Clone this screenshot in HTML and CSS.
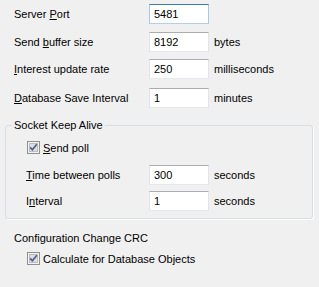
FILE: index.html
```html
<!DOCTYPE html>
<html lang="en">
<head>
    <meta charset="UTF-8">
    <title>Server Settings</title>
    <link rel="stylesheet" href="styles.css">
</head>
<body>
    <div class="fields">
        <div class="row first">
            <label class="label">Server <u>P</u>ort</label>
            <input class="text focus" type="text" value="5481">
        </div>
        <div class="row gap8">
            <label class="label">Send <u>b</u>uffer size</label>
            <input class="text" type="text" value="8192">
            <span class="unit">bytes</span>
        </div>
        <div class="row gap7">
            <label class="label"><u>I</u>nterest update rate</label>
            <input class="text" type="text" value="250">
            <span class="unit">milliseconds</span>
        </div>
        <div class="row gap9">
            <label class="label"><u>D</u>atabase Save Interval</label>
            <input class="text" type="text" value="1">
            <span class="unit">minutes</span>
        </div>
    </div>

    <fieldset class="group">
        <legend>Socket Keep Alive</legend>
        <div class="group-body">
            <label class="check">
                <svg width="13" height="13" viewBox="0 0 13 13">
                    <rect x="0.5" y="0.5" width="12" height="12" fill="#f4f4f4" stroke="#8e8f8f"/>
                    <rect x="2.5" y="2.5" width="8" height="8" fill="#dedede" stroke="#bcbcbc"/>
                    <path d="M3.2 6.4 L5.4 8.8 L9.8 3.2" fill="none" stroke="#4a5f8f" stroke-width="1.7"/>
                </svg>
                <span><u>S</u>end poll</span>
            </label>
            <div class="row inner gap11">
                <label class="label short"><u>T</u>ime between polls</label>
                <input class="text" type="text" value="300">
                <span class="unit">seconds</span>
            </div>
            <div class="row inner gap6">
                <label class="label short">I<u>n</u>terval</label>
                <input class="text" type="text" value="1">
                <span class="unit">seconds</span>
            </div>
        </div>
    </fieldset>

    <div class="crc">
        <div class="crc-title">Configuration Change CRC</div>
        <label class="check">
            <svg width="13" height="13" viewBox="0 0 13 13">
                <rect x="0.5" y="0.5" width="12" height="12" fill="#f4f4f4" stroke="#8e8f8f"/>
                <rect x="2.5" y="2.5" width="8" height="8" fill="#dedede" stroke="#bcbcbc"/>
                <path d="M3.2 6.4 L5.4 8.8 L9.8 3.2" fill="none" stroke="#4a5f8f" stroke-width="1.7"/>
            </svg>
            <span>Calculate for Database Objects</span>
        </label>
    </div>
</body>
</html>
```

FILE: styles.css
```css
body {
    margin: 0;
    background-color: #f0f0f0;
    font-family: "Liberation Sans", Arial, sans-serif;
    font-size: 11px;
    color: #000;
}

u {
    text-decoration: underline;
    text-underline-offset: 1px;
}

/* Top fields */
.fields {
    padding: 4px 0 0 14px;
}

.row {
    display: flex;
    align-items: center;
    height: 20px;
}

.gap6 { margin-top: 6px; }
.gap7 { margin-top: 7px; }
.gap8 { margin-top: 8px; }
.gap9 { margin-top: 9px; }
.gap11 { margin-top: 11px; }

.label {
    width: 135px;
    flex: none;
}

.label.short {
    width: 123px;
}

.text {
    box-sizing: border-box;
    width: 60px;
    height: 20px;
    margin: 0;
    padding: 0 0 0 4px;
    border: 1px solid #e2e3ea;
    border-top-color: #abadb3;
    border-bottom-color: #e3e9ef;
    background-color: #fff;
    font-family: inherit;
    font-size: 11px;
    color: #000;
    outline: none;
}

.text.focus {
    border-color: #b5cfe7;
    border-top-color: #3d7bad;
    border-left-color: #a4c9e3;
    border-right-color: #a4c9e3;
}

.unit {
    margin-left: 5px;
}

/* Group box */
.group {
    box-sizing: border-box;
    width: 308px;
    margin: 11px 0 0 5px;
    padding: 0 0 7px 6px;
    border: 1px solid #d5dfe5;
    border-radius: 3px;
    box-shadow: 1px 1px 0 #fff;
}

.group legend {
    padding: 0 2px;
    line-height: 13px;
}

.group-body {
    padding: 9px 0 0 14px;
}

.check {
    display: flex;
    align-items: center;
    gap: 3px;
    height: 13px;
}

.check svg {
    display: block;
    margin-left: 1px;
}

/* Configuration CRC */
.crc {
    padding: 13px 0 0 14px;
}

.crc-title {
    line-height: 13px;
}

.crc .check {
    margin: 7px 0 0 12px;
}
```
